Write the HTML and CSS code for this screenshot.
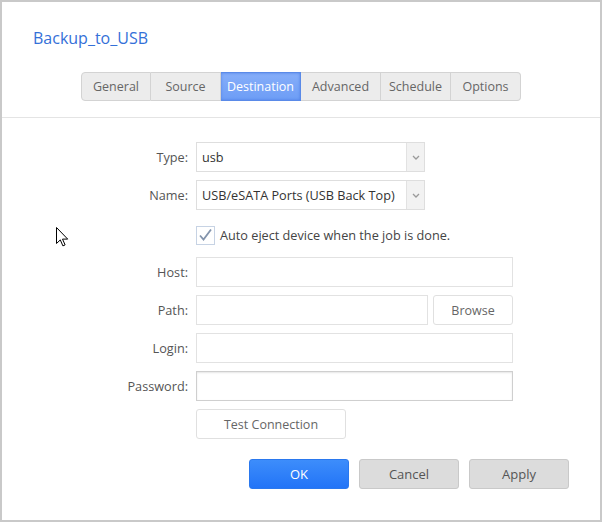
FILE: index.html
```html
<!DOCTYPE html>
<html lang="en">
<head>
  <meta charset="UTF-8">
  <title>Backup_to_USB</title>
  <link rel="stylesheet" href="styles.css">
</head>
<body>
  <div class="window">
    <div class="header">
      <h1 class="title">Backup_to_USB</h1>
      <div class="tabs">
        <span class="tab">General</span>
        <span class="tab">Source</span>
        <span class="tab active">Destination</span>
        <span class="tab">Advanced</span>
        <span class="tab">Schedule</span>
        <span class="tab">Options</span>
      </div>
    </div>

    <form class="form">
      <label class="label">Type:</label>
      <div class="select">
        <span class="select-value">usb</span>
        <span class="select-arrow">
          <svg width="8" height="5" viewBox="0 0 8 5"><path d="M1 1l3 3 3-3" fill="none" stroke="#9a9a9a" stroke-width="1.3"/></svg>
        </span>
      </div>

      <label class="label">Name:</label>
      <div class="select">
        <span class="select-value">USB/eSATA Ports (USB Back Top)</span>
        <span class="select-arrow">
          <svg width="8" height="5" viewBox="0 0 8 5"><path d="M1 1l3 3 3-3" fill="none" stroke="#9a9a9a" stroke-width="1.3"/></svg>
        </span>
      </div>

      <span></span>
      <div class="check-row">
        <span class="checkbox">
          <svg width="15" height="14" viewBox="0 0 15 14"><path d="M2 7.5l3.5 4L13 1.5" fill="none" stroke="#8394ac" stroke-width="1.8"/></svg>
        </span>
        <span class="check-text">Auto eject device when the job is done.</span>
      </div>

      <label class="label">Host:</label>
      <input class="field" type="text">

      <label class="label">Path:</label>
      <div class="path-row">
        <input class="field" type="text">
        <button type="button" class="btn-light browse">Browse</button>
      </div>

      <label class="label">Login:</label>
      <input class="field" type="text">

      <label class="label">Password:</label>
      <input class="field password" type="password">

      <span></span>
      <div>
        <button type="button" class="btn-light test">Test Connection</button>
      </div>
    </form>

    <div class="footer">
      <button type="button" class="btn btn-primary">OK</button>
      <button type="button" class="btn">Cancel</button>
      <button type="button" class="btn">Apply</button>
    </div>

    <svg class="cursor" width="13" height="20" viewBox="0 0 13 20">
      <path d="M0.5 0.5v16l3.8-3.6 2.6 6 2.2-1-2.6-5.8h5.2z" fill="#fff" stroke="#000" stroke-width="1"/>
    </svg>
  </div>
</body>
</html>
```

FILE: styles.css
```css
body {
  margin: 0;
  background: #fff;
  font-family: 'Open Sans', sans-serif;
  font-size: 12.7px;
  color: #555;
}

.window {
  position: relative;
  box-sizing: border-box;
  width: 602px;
  height: 522px;
  border: 2px solid #c9c9c9;
  background: #fff;
}

.header {
  padding-top: 26px;
  border-bottom: 1px solid #e4e4e4;
  padding-bottom: 16px;
}

.title {
  margin: 0 0 0 31px;
  font-size: 16px;
  line-height: 20px;
  font-weight: normal;
  color: #3470d8;
}

.tabs {
  display: flex;
  justify-content: center;
  margin-top: 24px;
}
.tab {
  box-sizing: border-box;
  height: 29px;
  line-height: 27px;
  width: 70px;
  text-align: center;
  background: #ececec;
  border: 1px solid #d3d3d3;
  border-left: none;
  color: #666;
  font-size: 12.5px;
}
.tab:first-child {
  border-left: 1px solid #d3d3d3;
  border-radius: 4px 0 0 4px;
}
.tab:last-child {
  border-radius: 0 4px 4px 0;
}
.tab:nth-child(3), .tab:nth-child(4) {
  width: 80px;
}
.tab.active {
  background: linear-gradient(#86aef9, #6d9df6);
  border-color: #5a8ae8;
  box-shadow: inset 0 0 3px #4f80e6;
  color: #fff;
}

.form {
  display: grid;
  grid-template-columns: 186px 317px;
  grid-template-rows: 30px 30px 31px 30px 30px 30px 30px 30px;
  column-gap: 8px;
  row-gap: 8px;
  padding-top: 24px;
}
.label {
  text-align: right;
  line-height: 30px;
  color: #555;
}

.select {
  display: flex;
  box-sizing: border-box;
  width: 229px;
  height: 30px;
  border: 1px solid #dedede;
}
.select-value {
  flex: 1;
  padding-left: 5px;
  line-height: 28px;
  color: #333;
  white-space: nowrap;
  overflow: hidden;
}
.select-arrow {
  width: 17px;
  display: flex;
  align-items: center;
  justify-content: center;
  background: #f2f2f2;
  border-left: 1px solid #e2e2e2;
}

.check-row {
  display: flex;
  align-items: center;
  gap: 5px;
  height: 30px;
  margin-top: 2px;
}
.checkbox {
  box-sizing: border-box;
  width: 19px;
  height: 19px;
  border: 1px solid #c7d3e4;
  display: flex;
  align-items: center;
  justify-content: center;
}
.check-text {
  color: #444;
}

.field {
  box-sizing: border-box;
  width: 100%;
  height: 30px;
  margin: 0;
  border: 1px solid #e2e2e2;
  border-radius: 0;
  outline: none;
}
.field.password {
  border-color: #cfcfcf;
  box-shadow: inset 0 1px 2px #e6e6e6;
}

.path-row {
  display: flex;
  gap: 5px;
}
.path-row .field {
  width: 232px;
}

.btn-light {
  box-sizing: border-box;
  height: 30px;
  margin: 0;
  background: #fff;
  border: 1px solid #e0e0e0;
  border-radius: 3px;
  font-family: 'Open Sans', sans-serif;
  font-size: 12.5px;
  color: #666;
}
.browse {
  width: 80px;
}
.test {
  width: 150px;
}

.footer {
  display: flex;
  justify-content: flex-end;
  gap: 10px;
  padding: 20px 31px 0 0;
}
.btn {
  box-sizing: border-box;
  width: 100px;
  height: 30px;
  background: #dcdcdc;
  border: 1px solid #c9c9c9;
  border-radius: 3px;
  font-family: 'Open Sans', sans-serif;
  font-size: 13px;
  color: #555;
}
.btn-primary {
  background: linear-gradient(#3d8dfb, #2274f7);
  border-color: #2a78ee;
  color: #fff;
}

.cursor {
  position: absolute;
  left: 54px;
  top: 225px;
}
```
